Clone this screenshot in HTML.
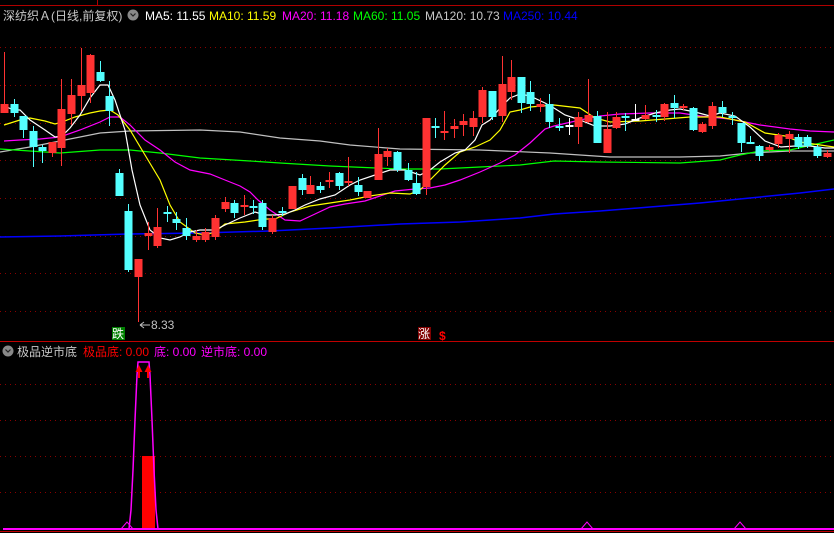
<!DOCTYPE html>
<html><head><meta charset="utf-8"><style>
html,body{margin:0;padding:0;background:#000;width:834px;height:533px;overflow:hidden}
svg{display:block}
text{font-family:"Liberation Sans","Noto Sans CJK SC",sans-serif;font-size:12px}
</style></head><body>
<svg width="834" height="533" viewBox="0 0 834 533" xmlns="http://www.w3.org/2000/svg">
<rect width="834" height="533" fill="#000"/>
<!-- frame -->
<line x1="0" y1="5.5" x2="834" y2="5.5" stroke="#b00000"/>
<line x1="97.5" y1="0" x2="97.5" y2="5" stroke="#b00000"/>
<line x1="0" y1="341.5" x2="834" y2="341.5" stroke="#c00000"/>
<line x1="0" y1="531.5" x2="834" y2="531.5" stroke="#c00000"/>
<!-- grid -->
<g stroke="#8a0000" stroke-dasharray="1 4">
<line x1="0" y1="47.5" x2="834" y2="47.5"/><line x1="0" y1="85.5" x2="834" y2="85.5"/>
<line x1="0" y1="123.5" x2="834" y2="123.5"/><line x1="0" y1="160.5" x2="834" y2="160.5"/>
<line x1="0" y1="198.5" x2="834" y2="198.5"/><line x1="0" y1="236.5" x2="834" y2="236.5"/>
<line x1="0" y1="273.5" x2="834" y2="273.5"/><line x1="0" y1="311.5" x2="834" y2="311.5"/>
<line x1="0" y1="384.5" x2="834" y2="384.5"/><line x1="0" y1="420.5" x2="834" y2="420.5"/>
<line x1="0" y1="456.5" x2="834" y2="456.5"/><line x1="0" y1="492.5" x2="834" y2="492.5"/>
</g>
<!-- MA lines -->
<g fill="none" stroke-width="1.2">
<polyline stroke="#0000ff" stroke-width="1.5" points="0,237 60,236 130,234 200,233 270,231 330,228 400,224 460,222 520,218 554,214 600,211 650,207 700,203 750,198 800,193 834,189"/>
<polyline stroke="#c0c0c0" points="0,152 30,147 60,141 100,133 130,131 200,130 240,132 280,138 320,141 350,145 400,149 480,150 550,153 610,157 680,157 720,156 750,153 790,151 834,151"/>
<polyline stroke="#00ff00" points="0,149 60,153 100,150 130,150 160,153 200,158 250,161 280,163 330,166 400,169 440,169 480,167 520,165 554,161 600,162 680,163 720,160 740,155 760,151 790,150 834,140"/>
<polyline stroke="#ff00ff" points="4,141 20,140 40,139 60,137 80,130 100,122 110,117 120,117 130,125 145,140 160,150 175,162 190,170 210,174 225,180 240,186 250,192 258,200 270,210 285,220 300,221 315,214 330,207 345,204 365,201 380,196 395,191 415,189 430,188 445,185 460,180 480,172 500,163 515,155 530,143 545,129 554,126 580,120 600,116 620,114 650,113 680,113 700,116 730,119 760,125 790,129 810,131 834,132"/>
<polyline stroke="#ffff00" points="4,125 20,120 30,118 45,121 55,124 62,122 75,117 90,113 100,111 110,110 118,115 130,130 145,155 160,180 170,205 180,222 195,233 205,235 215,232 225,224 245,222 265,219 275,219 290,212 310,206 330,203 350,200 370,196 390,193 410,194 420,190 430,180 445,165 460,152 475,147 490,140 500,130 510,112 520,110 530,107 554,105 580,108 595,118 610,122 640,121 690,117 720,117 745,122 765,133 785,136 800,142 834,147"/>
<polyline stroke="#ffffff" points="4,106 14,110 20,110 30,120 45,130 55,137 62,136 70,128 80,115 90,98 100,85 108,85 115,100 125,130 132,170 140,205 150,230 160,238 170,240 180,237 190,232 200,230 215,230 225,225 240,218 255,212 265,215 275,215 285,214 295,210 305,205 320,199 335,195 350,185 360,180 375,175 390,170 405,170 420,175 430,170 440,162 455,153 465,150 475,140 482,125 490,120 500,108 510,98 520,94 530,96 545,103 554,108 565,115 580,120 595,126 610,126 625,124 640,118 655,113 670,110 680,109 695,112 710,116 720,113 735,116 750,127 765,141 781,147 795,146 810,146 825,148 834,148"/>
</g>
<!-- candles -->
<g id="c"></g>
<!-- markers -->
<line x1="138.5" y1="277" x2="138.5" y2="322" stroke="#ff3232"/>
<path d="M140 325 H150 M140 325 l4 -3 M140 325 l4 3" stroke="#c0c0c0" fill="none"/>
<text x="151" y="329" fill="#c0c0c0">8.33</text>
<rect x="112" y="327" width="13" height="13" fill="#008000"/>
<text x="112" y="338" fill="#fff" font-size="11">跌</text>
<rect x="418" y="327" width="13" height="13" fill="#800000"/>
<text x="418" y="338" fill="#fff" font-size="11">涨</text>
<text x="439" y="340" fill="#ff0000" font-size="12" font-weight="bold">$</text>
<!-- header -->
<text x="3" y="20" fill="#c8c8c8">深纺织Ａ(日线,前复权)</text>
<circle cx="133" cy="15" r="5.5" fill="#888"/><path d="M130.5 13.5 l2.5 2.5 l2.5 -2.5" stroke="#222" fill="none" stroke-width="1.2"/>
<text x="145" y="20" fill="#fff">MA5: 11.55</text>
<text x="209" y="20" fill="#ffff00">MA10: 11.59</text>
<text x="282" y="20" fill="#ff00ff">MA20: 11.18</text>
<text x="353" y="20" fill="#00ff00">MA60: 11.05</text>
<text x="425" y="20" fill="#c8c8c8">MA120: 10.73</text>
<text x="503" y="20" fill="#0000ff">MA250: 10.44</text>
<!-- lower panel -->
<circle cx="8" cy="351" r="5.5" fill="#888"/><path d="M5.5 349.5 l2.5 2.5 l2.5 -2.5" stroke="#222" fill="none" stroke-width="1.2"/>
<text x="17" y="356" fill="#c8c8c8">极品逆市底</text>
<text x="83" y="356" fill="#ff0000">极品底: 0.00</text>
<text x="154" y="356" fill="#ff00ff">底: 0.00</text>
<text x="201" y="356" fill="#ff00ff">逆市底: 0.00</text>
<rect x="142" y="456" width="13" height="73" fill="#ff0000"/>
<polyline fill="none" stroke="#ff00ff" stroke-width="1.5" points="129,529 131,510 133,470 135,420 137,375 138,362 149,362 150,375 152,420 154,470 156,510 158,529"/>
<path d="M139 365 l-3.5 7 h7z M148 365 l-3.5 7 h7z" fill="#ff0000"/>
<line x1="139" y1="372" x2="139" y2="378" stroke="#ff0000" stroke-width="2"/>
<line x1="148" y1="372" x2="148" y2="378" stroke="#ff0000" stroke-width="2"/>
<path d="M121 529 l6 -7 l6 7 M581 529 l6 -7 l6 7 M734 529 l6 -7 l6 7" stroke="#ff00ff" fill="none"/>
<line x1="3" y1="529" x2="834" y2="529" stroke="#ff00ff" stroke-width="2"/>
</g>
</svg>
<script>
// [x, open/top, close/bottom, wickTop, wickBot, red?]
var d=[
[4,104,113,52,113,1],[14,104,113,99,117,0],[23,116,130,116,138,0],[33,131,147,126,167,0],[42,147,151,145,163,0],
[52,142,153,142,157,1],[61,109,148,79,166,1],[71,95,114,79,125,1],[81,85,96,48,111,1],[90,55,93,54,103,1],
[100,72,81,61,82,0],[109,96,111,81,126,0],[119,173,196,169,196,0],[128,211,270,204,272,0],[138,259,277,259,277,1],
[148,233,236,222,250,1],[157,227,246,208,248,1],[167,212,214,206,222,0],[176,219,223,212,230,0],[186,228,236,218,240,0],
[196,236,240,230,242,1],[205,232,240,228,242,1],[215,218,237,215,240,1],[225,202,209,197,212,1],[234,203,213,200,218,0],
[244,205,207,195,215,1],[253,206,208,200,214,0],[262,203,227,200,230,0],[272,218,232,215,234,1],[282,211,213,207,216,0],
[292,186,209,186,209,1],[302,178,190,174,195,0],[310,185,194,176,194,1],[320,186,190,182,193,0],[329,180,182,172,188,1],
[339,173,186,172,190,0],[348,181,183,157,186,1],[358,185,192,177,196,0],[367,191,198,191,198,1],[378,154,180,128,180,1],
[387,151,157,148,166,1],[397,152,170,151,172,0],[408,170,180,163,181,0],[416,183,194,172,195,0],[426,118,187,118,195,1],
[435,126,128,118,138,0],[444,131,133,111,140,1],[454,126,129,119,138,1],[463,121,125,114,136,1],[473,118,127,111,136,1],
[482,90,117,87,123,1],[492,91,117,91,120,0],[502,84,116,56,122,1],[511,77,92,60,100,1],[521,77,103,77,113,0],
[530,92,104,81,111,0],[540,104,107,98,112,1],[549,104,122,94,128,0],[559,126,128,118,131,0],[569,125,127,118,135,2],
[578,117,127,112,144,1],[588,115,122,79,123,1],[597,116,143,111,143,0],[607,129,153,112,153,1],[616,117,128,112,129,1],
[625,116,118,113,131,0],[635,119,121,104,121,2],[645,115,119,105,120,1],[656,115,117,110,122,0],[664,104,117,103,121,1],
[674,103,108,95,118,0],[683,106,108,104,110,1],[693,108,130,107,131,0],[702,124,132,122,133,1],[712,106,126,102,129,1],
[722,107,113,101,117,0],[732,116,118,112,125,0],[741,123,143,123,152,0],[750,142,144,136,144,0],[759,146,156,145,161,0],
[769,147,150,145,151,1],[778,135,144,133,148,1],[789,134,139,131,153,1],[798,137,147,134,149,0],[807,137,146,135,148,0],
[817,147,156,145,158,0],[827,153,157,150,158,1]];
var s='';
d.forEach(function(c){var col=c[5]==1?'#ff3232':(c[5]==2?'#ffffff':'#54ffff');
s+='<line x1="'+(c[0]+.5)+'" y1="'+c[3]+'" x2="'+(c[0]+.5)+'" y2="'+c[4]+'" stroke="'+col+'"/>';
var h=Math.max(c[2]-c[1],1.5);
s+='<rect x="'+(c[0]-3.5)+'" y="'+c[1]+'" width="8" height="'+h+'" fill="'+col+'"/>';});
document.getElementById('c').innerHTML=s;
</script>
</body></html>
